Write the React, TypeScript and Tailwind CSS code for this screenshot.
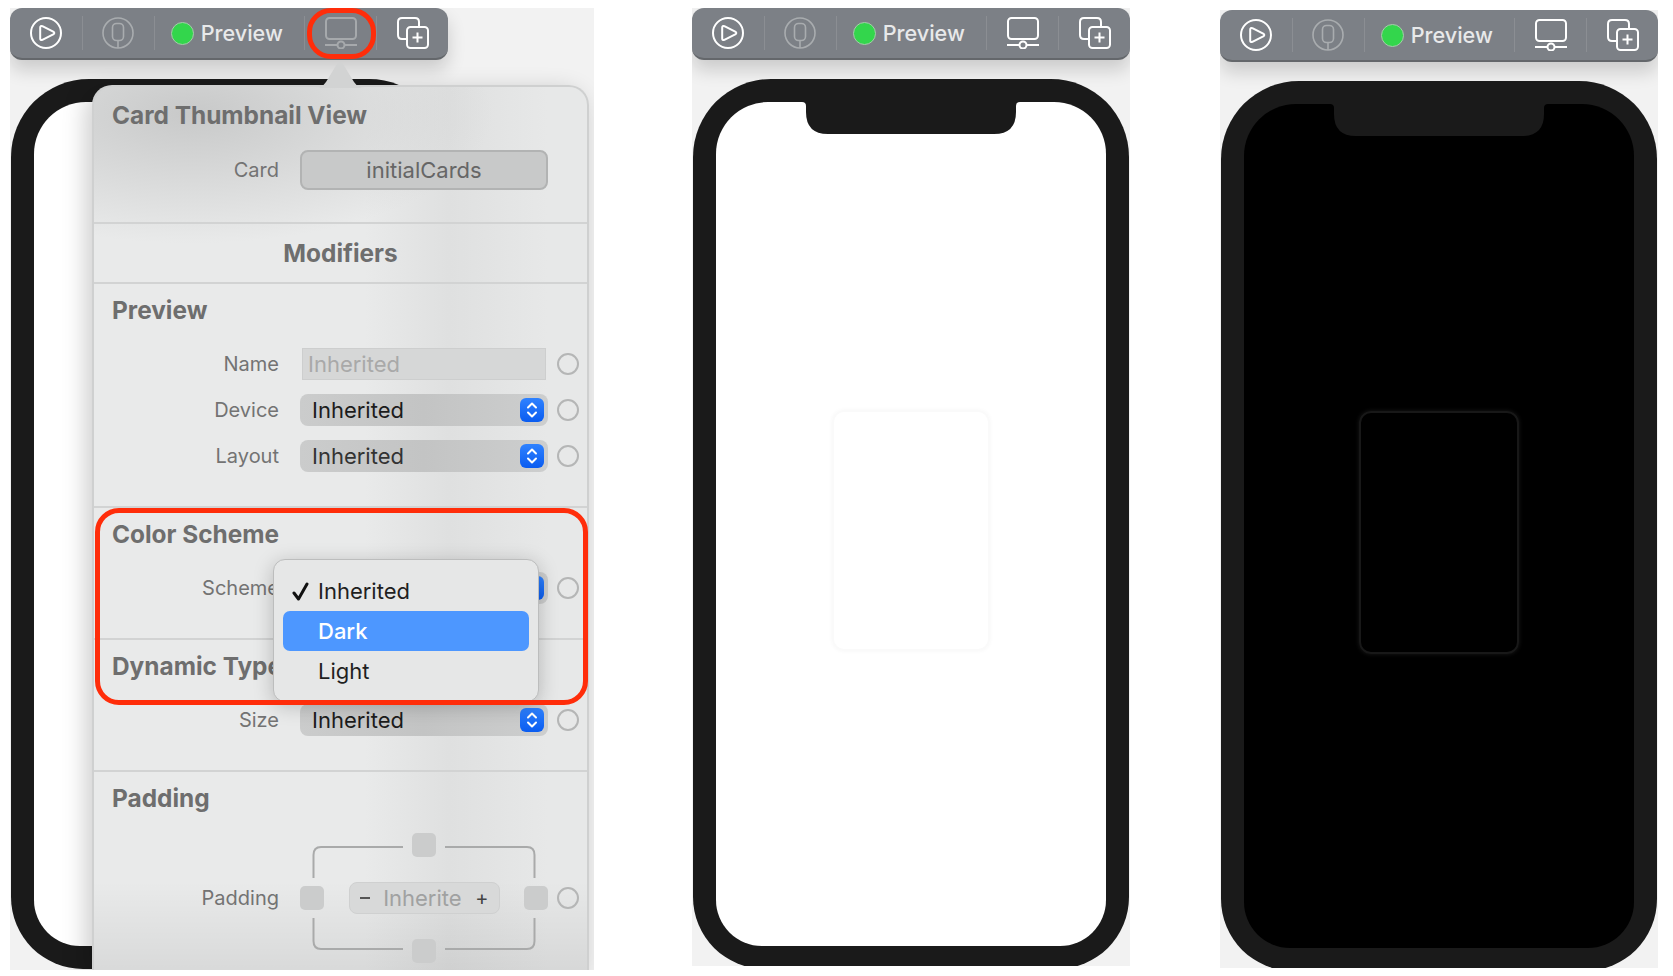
import { ReactNode } from "react";

function PlayIcon() {
  return (
    <svg width="32" height="32" viewBox="0 0 32 32" fill="none" stroke="#fff" strokeWidth="2">
      <circle cx="16" cy="16" r="15" />
      <path d="M12.4 9.2 L23.2 14.6 Q25.4 16 23.2 17.4 L12.4 22.8 Q10.2 23.6 10.2 21.4 V10.6 Q10.2 8.4 12.4 9.2 Z" strokeLinejoin="round" />
    </svg>
  );
}

function DeviceIcon() {
  return (
    <svg width="32" height="32" viewBox="0 0 32 32" fill="none" stroke="#a9acaf" strokeWidth="1.6">
      <circle cx="16" cy="16" r="15" />
      <rect x="10.500" y="6.500" width="11" height="17" rx="4" />
      <path d="M16 23.500 V31" />
    </svg>
  );
}

function MonitorIcon({ dim }: { dim?: boolean }) {
  return (
    <svg width="32" height="32" viewBox="0 0 32 32" fill="none" stroke={dim ? "#a6a9ac" : "#fff"} strokeWidth="2">
      <rect x="1" y="1" width="30" height="21" rx="3.500" />
      <path d="M0 28 H12 M20 28 H32" />
      <circle cx="16" cy="28" r="3.500" />
    </svg>
  );
}

function DuplicateIcon() {
  return (
    <svg width="32" height="32" viewBox="0 0 32 32" fill="none" stroke="#fff" strokeWidth="2">
      <path d="M9 22 H5 Q1 22 1 18 V5 Q1 1 5 1 H18 Q22 1 22 5 V9" />
      <rect x="10" y="10" width="21" height="21" rx="3.500" />
      <path d="M20.500 15.500 V25.500 M15.500 20.500 H25.500" />
    </svg>
  );
}

function ToolbarCell({ width, children }: { width: string; children: ReactNode }) {
  return <div className={`flex h-full items-center justify-center ${width}`}>{children}</div>;
}

function Toolbar({ dim }: { dim?: boolean }) {
  const sep = "h-[34px] w-px bg-[#8b8e93]";
  return (
    <div className="flex h-[52px] w-[438px] items-center rounded-[12px] border-b-2 border-[#64676b] bg-[#7c8086] pl-px shadow-[0_10px_18px_rgba(0,0,0,0.16)]">
      <ToolbarCell width="w-[71px]"><PlayIcon /></ToolbarCell>
      <div className={sep} />
      <ToolbarCell width="w-[71px]"><DeviceIcon /></ToolbarCell>
      <div className={sep} />
      <div className="flex h-full w-[150px] items-center gap-[7px] pl-[16px]">
        <span className="h-[23px] w-[23px] shrink-0 rounded-full border border-[#a8c9ad] bg-[#33d64c]" />
        <span className="pt-px text-[21.6px] font-medium leading-none text-[#e8e9ea]">Preview</span>
      </div>
      <div className={sep} />
      <ToolbarCell width="w-[71px]"><MonitorIcon dim={dim} /></ToolbarCell>
      <div className={sep} />
      <ToolbarCell width="w-[71px]"><DuplicateIcon /></ToolbarCell>
    </div>
  );
}

function Phone({ dark }: { dark?: boolean }) {
  return (
    <div className="ml-px mt-[19px] flex h-[890px] w-[436px] flex-col rounded-[78px_78px_72px_72px] bg-[#1a1a1a] p-[23px]">
      <div className={`relative flex flex-1 items-center justify-center rounded-[52px_52px_46px_46px] pt-[12px] ${dark ? "bg-black" : "bg-white"}`}>
        <svg className="absolute left-1/2 top-0 -translate-x-1/2" width="218" height="32" viewBox="0 0 218 32">
          <path d="M0 0 H218 Q214 0 214 4 V10 Q214 32 192 32 H26 Q4 32 4 10 V4 Q4 0 0 0 Z" fill="#1a1a1a" />
        </svg>
        <div className={dark ? "h-[243px] w-[160px] rounded-[12px] border-2 border-[#181818] shadow-[0_0_4px_#1a1a1a]" : "h-[241px] w-[158px] rounded-[12px] border-2 border-[#fafafa] shadow-[0_0_4px_#f6f6f6]"} />
      </div>
    </div>
  );
}

function Radio() {
  return <span className="h-[22px] w-[22px] shrink-0 rounded-full border-2 border-[#b5b6b6]" />;
}

function Label({ children }: { children: ReactNode }) {
  return <span className="w-[185px] shrink-0 text-right text-[20px] leading-none text-[#737373]">{children}</span>;
}

function Select({ tone = "text-[#2a2a2a]", value = "Inherited" }: { tone?: string; value?: string }) {
  return (
    <div className="flex h-[32px] w-[248px] items-center justify-between rounded-[8px] bg-[linear-gradient(90deg,#cbcccc,#c3c4c4_50%,#cdcece)] pl-[12px] pr-[4px]">
      <span className={`text-[22px] leading-none ${tone}`}>{value}</span>
      <span className="flex h-[24px] w-[24px] items-center justify-center rounded-[6px] bg-[linear-gradient(180deg,#2f82ff,#0a5cf0)]">
        <svg width="12" height="18" viewBox="0 0 12 18" fill="none" stroke="#fff" strokeWidth="2" strokeLinecap="round" strokeLinejoin="round">
          <path d="M2 6.500 L6 2.500 L10 6.500 M2 11.500 L6 15.500 L10 11.500" />
        </svg>
      </span>
    </div>
  );
}

function Row({ label, children }: { label: string; children: ReactNode }) {
  return (
    <div className="flex items-center">
      <Label>{label}</Label>
      <div className="ml-[21px]">{children}</div>
      <div className="ml-[9px] flex"><Radio /></div>
    </div>
  );
}

function Title({ children }: { children: ReactNode }) {
  return <h2 className="h-[26px] pl-[18px] text-[24.4px] font-bold leading-[24px] text-[#6e6e6e]">{children}</h2>;
}

const section = "border-b-2 border-[#d2d3d3] pt-[14px]";

function PaddingControl() {
  const square = "h-[24px] w-[24px] rounded-[5px] bg-[#cbcccc]";
  return (
    <div className="relative grid h-[130px] w-[248px] grid-cols-[24px_1fr_24px] grid-rows-[24px_1fr_24px] items-center justify-items-center">
      <svg className="absolute left-0 top-0" width="248" height="130" viewBox="0 0 248 130" fill="none" stroke="#a9aaaa" strokeWidth="2">
        <path d="M103 14 H21 Q13.500 14 13.500 22 V45 M145 14 H227 Q234.500 14 234.500 22 V45 M13.500 85 V108 Q13.500 116 21 116 H103 M234.500 85 V108 Q234.500 116 227 116 H145" />
      </svg>
      <div className={`${square} relative col-start-2 row-start-1`} />
      <div className={`${square} relative col-start-1 row-start-2`} />
      <div className="relative col-start-2 row-start-2 flex h-[32px] w-[151px] items-center justify-between rounded-[8px] border border-[#cfd0d0] bg-[#d8d9d9] px-[10px]">
        <span className="h-[2px] w-[10px] bg-[#555]" />
        <span className="text-[22px] leading-none text-[#a0a1a1]">Inherite</span>
        <span className="text-[20px] leading-none text-[#444]">+</span>
      </div>
      <div className={`${square} relative col-start-3 row-start-2`} />
      <div className={`${square} relative col-start-2 row-start-3 bg-[#c3c4c4]`} />
    </div>
  );
}

function Popover() {
  return (
    <div className="absolute bottom-0 left-[82px] top-[77px] w-[497px] rounded-t-[20px] border-x-2 border-t-2 border-[#cfd0d0] bg-[linear-gradient(180deg,transparent_90%,rgba(0,0,0,0.07)_100%),radial-gradient(ellipse_300px_130px_at_20%_3%,#c8c9c9_0%,rgba(200,201,201,0)_100%),linear-gradient(90deg,#e9eaea_0%,#e9eaea_55%,#dfe0e0_72%,#e7e8e8_92%)] shadow-[-6px_6px_24px_rgba(0,0,0,0.2)]">
      <svg className="absolute left-[221px] top-[-26px]" width="50" height="27" viewBox="0 0 50 27">
        <path d="M0 27 Q7 27 11 21 L22 3 Q25 -1 28 3 L39 21 Q43 27 50 27 Z" fill="#d2d3d3" />
      </svg>

      <section className="h-[137px] border-b-2 border-[#d2d3d3] pt-[16px]">
        <Title>Card Thumbnail View</Title>
        <div className="mt-[21px] flex items-center">
          <Label>Card</Label>
          <div className="ml-[21px] flex h-[40px] w-[248px] items-center justify-center rounded-[8px] border-2 border-[#b2b3b3] bg-[#c8c9c9] text-[22px] text-[#666]">
            initialCards
          </div>
        </div>
      </section>

      <section className="flex h-[60px] items-center justify-center border-b-2 border-[#d2d3d3] pt-[1px]">
        <h2 className="text-[24.4px] font-bold text-[#6e6e6e]">Modifiers</h2>
      </section>

      <section className={`h-[224px] ${section}`}>
        <Title>Preview</Title>
        <div className="mt-[24px] flex flex-col gap-[14px]">
          <Row label="Name">
            <div className="mx-[2px] flex h-[32px] w-[244px] items-center border border-[#cdcece] bg-[#d6d7d7] pl-[5px] text-[22px] leading-none text-[#a9a9a9]">
              Inherited
            </div>
          </Row>
          <Row label="Device"><Select tone="text-[#1c1c1c]" /></Row>
          <Row label="Layout"><Select tone="text-[#333]" /></Row>
        </div>
      </section>

      <section className={`h-[132px] ${section}`}>
        <Title>Color Scheme</Title>
        <div className="mt-[24px]">
          {/* the value is covered by the open menu */}
          <Row label="Scheme"><Select value="" /></Row>
        </div>
      </section>

      <section className={`h-[132px] ${section}`}>
        <Title>Dynamic Type</Title>
        <div className="mt-[24px]">
          <Row label="Size"><Select tone="text-[#1c1c1c]" /></Row>
        </div>
      </section>

      <section className="pt-[14px]">
        <Title>Padding</Title>
        <div className="mt-[21px]">
          <Row label="Padding"><PaddingControl /></Row>
        </div>
      </section>

      <div className="absolute left-[179px] top-[472px] flex h-[143px] w-[266px] flex-col rounded-[12px] border border-[#bcbdbd] bg-[#e6e7e7] px-[9px] pt-[11px] shadow-[0_4px_20px_rgba(0,0,0,0.22)]">
        <div className="relative flex h-[40px] items-center pl-[35px] text-[22px] leading-none text-[#1f1f1f]">
          <svg className="absolute left-[9px] top-[11px]" width="17" height="19" viewBox="0 0 17 19" fill="none" stroke="#111" strokeWidth="3" strokeLinecap="round" strokeLinejoin="round">
            <path d="M2 11 L6.500 17 L15 2" />
          </svg>
          Inherited
        </div>
        <div className="flex h-[40px] items-center rounded-[7px] bg-[#4d97ff] pl-[35px] text-[22px] font-medium leading-none text-white">Dark</div>
        <div className="flex h-[40px] items-center pl-[35px] text-[22px] leading-none text-[#1f1f1f]">Light</div>
      </div>

      <div className="absolute left-[1px] top-[421px] h-[197px] w-[493px] rounded-[24px] border-[5px] border-[#ff2d0a]" />
    </div>
  );
}

export default function App() {
  return (
    <div className="flex h-[976px] w-[1673px] items-start overflow-hidden bg-white pl-[10px] font-['Inter',sans-serif]">
      <div className="relative mt-[8px] h-[962px] w-[584px] shrink-0 overflow-hidden bg-[#f2f2f2]">
        <Toolbar dim />
        <Phone />
        <div className="absolute left-[297px] top-0 h-[51px] w-[69px] rounded-[24px] border-[5px] border-[#ff2d0a]" />
        <Popover />
      </div>
      <div className="ml-[98px] mt-[8px] h-[958px] w-[438px] shrink-0 overflow-hidden bg-[#f2f2f2]">
        <Toolbar />
        <Phone />
      </div>
      <div className="ml-[90px] mt-[10px] h-[958px] w-[438px] shrink-0 overflow-hidden bg-[#f2f2f2]">
        <Toolbar />
        <Phone dark />
      </div>
    </div>
  );
}
